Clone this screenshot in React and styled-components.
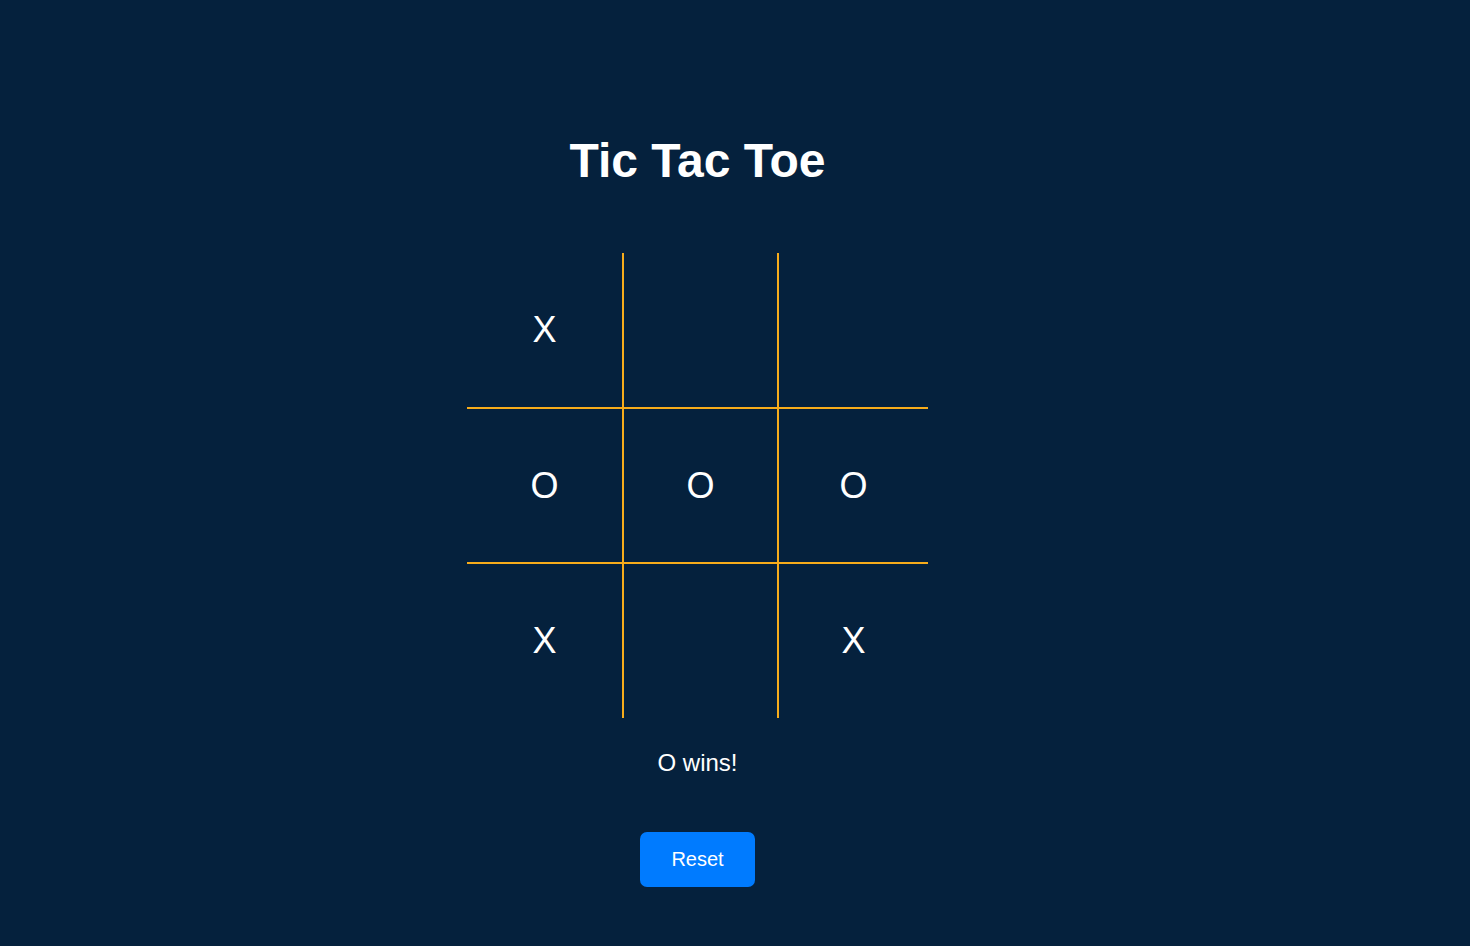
import React, { useState } from 'react'
import styled, { createGlobalStyle } from 'styled-components'

const GlobalStyle = createGlobalStyle`
    html, body {
        margin: 0;
        padding: 0;
        background: #05213d;
        font-family: "Liberation Sans", Arial, sans-serif;
    }
`

const lines = [[0, 1, 2], [3, 4, 5], [6, 7, 8], [0, 3, 6], [1, 4, 7], [2, 5, 8], [0, 4, 8], [2, 4, 6]]

function getWinner(squares) {
    for (const [a, b, c] of lines) {
        if (squares[a] && squares[a] === squares[b] && squares[a] === squares[c]) return squares[a]
    }
    return null
}

const start = ['X', '', '', 'O', 'O', 'O', 'X', '', 'X']

export default function App() {
    const [squares, setSquares] = useState(start)
    const winner = getWinner(squares)
    const xNext = squares.filter(Boolean).length % 2 === 0

    const play = (i) => {
        if (squares[i] || winner) return
        const next = squares.slice()
        next[i] = xNext ? 'X' : 'O'
        setSquares(next)
    }

    return (
        <Page>
            <GlobalStyle />
            <Title>Tic Tac Toe</Title>
            <Board>
                {squares.map((val, i) => (
                    <Cell key={i} $col={i % 3} $row={Math.floor(i / 3)} onClick={() => play(i)}>
                        {val}
                    </Cell>
                ))}
            </Board>
            <Status>{winner ? `${winner} wins!` : `Next player: ${xNext ? 'X' : 'O'}`}</Status>
            <ResetButton onClick={() => setSquares(Array(9).fill(''))}>Reset</ResetButton>
        </Page>
    )
}

const Page = styled.div`
    min-height: 100vh;
    box-sizing: border-box;
    display: flex;
    flex-direction: column;
    align-items: center;
    padding: 133px 75px 0 0;
    color: #fff;
`

const Title = styled.h1`
    margin: 0;
    font-size: 48px;
    font-weight: 700;
    line-height: 55px;
`

const Board = styled.div`
    margin-top: 65px;
    display: grid;
    grid-template-columns: 157px 155px 149px;
    grid-template-rows: 156px 155px 154px;
`

const Cell = styled.div`
    box-sizing: border-box;
    display: flex;
    align-items: center;
    justify-content: center;
    font-size: 36px;
    cursor: pointer;
    border-right: ${p => (p.$col < 2 ? '2px solid #f7ac1b' : 'none')};
    border-bottom: ${p => (p.$row < 2 ? '2px solid #f7ac1b' : 'none')};
`

const Status = styled.p`
    margin: 31px 0 0;
    font-size: 24px;
    line-height: 28px;
`

const ResetButton = styled.button`
    margin-top: 55px;
    padding: 16px 31px;
    font-family: "Liberation Sans", Arial, sans-serif;
    font-size: 20px;
    line-height: 23px;
    color: #fff;
    background: #007bff;
    border: none;
    border-radius: 7px;
    cursor: pointer;
`
